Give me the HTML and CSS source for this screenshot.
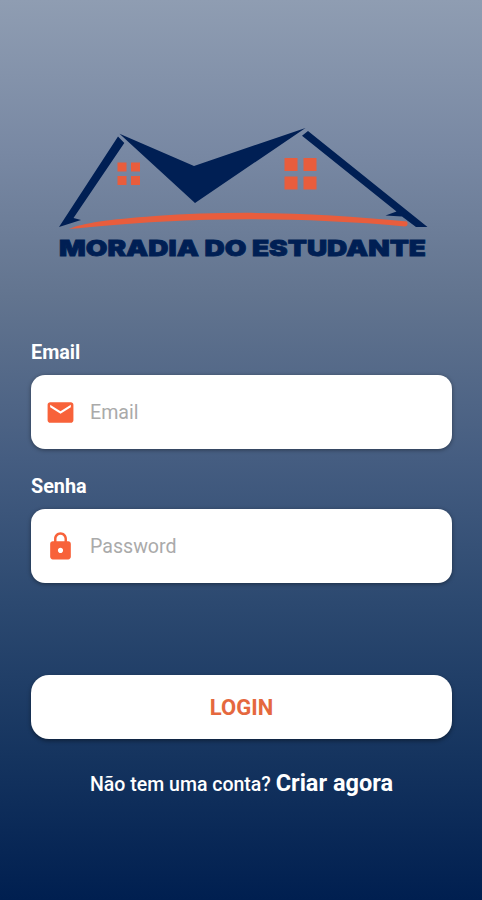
FILE: index.html
```html
<!DOCTYPE html>
<html lang="pt-BR">
<head>
    <meta charset="UTF-8">
    <meta name="viewport" content="width=device-width, initial-scale=1.0">
    <title>Moradia do Estudante</title>
    <link rel="stylesheet" href="styles.css">
</head>
<body>
    <main class="login">
        <svg class="logo" viewBox="56 124 374 138" role="img" aria-label="Moradia do Estudante">
            <!-- roofs -->
            <g class="logo-navy">
                <path d="M118 136.5L124.3 143L73.5 218L81 220L59 227Z"/>
                <path d="M119.5 133.8L194 166L305.5 128L195 203Z"/>
                <path d="M308 131L302 135.8L396.5 211.5L385.5 215.5L402 216.5L416 227H427.5Z"/>
            </g>
            <!-- windows and ground line -->
            <g class="logo-orange">
                <path d="M117.5 162.5h9v9h-9zM131 162.5h9v9h-9zM117.5 176h9v9h-9zM131 176h9v9h-9z"/>
                <path d="M284.5 158h13v13h-13zM303.5 158h13v13h-13zM284.5 176.5h13v13h-13zM303.5 176.5h13v13h-13z"/>
                <path d="M69 229C83 223 108 219.5 155 216C240 210 325 213 407 221.5Q409 226 405 226.5C325 219 240 217.5 165 221.5C125 223.5 93 227 69 229Z"/>
            </g>
            <text class="logo-text" x="59" y="255.5" textLength="367" lengthAdjust="spacingAndGlyphs">MORADIA DO ESTUDANTE</text>
        </svg>

        <form>
            <label for="email">Email</label>
            <div class="field">
                <svg class="icon" viewBox="0 0 24 24">
                    <path d="M20 4H4c-1.1 0-1.99.9-1.99 2L2 18c0 1.1.9 2 2 2h16c1.1 0 2-.9 2-2V6c0-1.1-.9-2-2-2zm0 4l-8 5-8-5V6l8 5 8-5v2z"/>
                </svg>
                <input type="email" id="email" name="email" placeholder="Email">
            </div>

            <label for="password">Senha</label>
            <div class="field">
                <svg class="icon" viewBox="0 0 24 24">
                    <path d="M18 8h-1V6c0-2.76-2.24-5-5-5S7 3.24 7 6v2H6c-1.1 0-2 .9-2 2v10c0 1.1.9 2 2 2h12c1.1 0 2-.9 2-2V10c0-1.1-.9-2-2-2zm-6 9c-1.1 0-2-.9-2-2s.9-2 2-2 2 .9 2 2-.9 2-2 2zm3.1-9H8.9V6c0-1.71 1.39-3.1 3.1-3.1 1.71 0 3.1 1.39 3.1 3.1v2z"/>
                </svg>
                <input type="password" id="password" name="password" placeholder="Password">
            </div>

            <button type="submit">LOGIN</button>
        </form>

        <p class="signup">Não tem uma conta? <a href="#">Criar agora</a></p>
    </main>
</body>
</html>
```

FILE: styles.css
```css
* {
    box-sizing: border-box;
}

body {
    margin: 0;
    font-family: Roboto, sans-serif;
    color: #fff;
}

.login {
    height: 900px;
    padding: 124px 30px 0 31px;
    background: linear-gradient(#8f9db2, #7888a3 17%, #62748f 33%, #455d81 51%, #2c4970 67%, #15345f 84%, #001f50);
}

.logo {
    display: block;
    width: 374px;
    height: 138px;
    margin: 0 auto 77px 25px;
}

.logo-navy {
    fill: #001f54;
}

.logo-orange {
    fill: #e85d3d;
}

.logo-text {
    font-family: Inter, sans-serif;
    font-size: 21.5px;
    font-weight: 900;
    fill: #001f54;
    stroke: #001f54;
    stroke-width: 0.8px;
}

label {
    display: block;
    height: 27px;
    margin-bottom: 9px;
    font-size: 19.8px;
    font-weight: 700;
    line-height: 27px;
}

.field {
    display: flex;
    align-items: center;
    height: 74px;
    margin-bottom: 24px;
    padding: 0 14px;
    background-color: #fff;
    border-radius: 14px;
    box-shadow: 0 1px 4px rgba(0, 0, 0, 0.4);
}

.icon {
    width: 31px;
    height: 31px;
    fill: #f8623a;
}

input {
    flex: 1;
    min-width: 0;
    padding: 0 0 0 14px;
    border: none;
    outline: none;
    background: none;
    font-family: inherit;
    font-size: 19.6px;
}

input::placeholder {
    color: #aaa;
}

button {
    display: block;
    width: 100%;
    height: 64px;
    margin-top: 92px;
    border: none;
    border-radius: 18px;
    background-color: #fff;
    box-shadow: 0 2px 4px rgba(0, 0, 0, 0.4);
    color: #e5683e;
    font-family: inherit;
    font-size: 22px;
    font-weight: 700;
    cursor: pointer;
}

.signup {
    margin: 28px 0 0;
    font-size: 19.5px;
    font-weight: 500;
    line-height: 32px;
    text-align: center;
    white-space: nowrap;
}

.signup a {
    color: #fff;
    font-size: 23.5px;
    font-weight: 700;
    text-decoration: none;
}
```
